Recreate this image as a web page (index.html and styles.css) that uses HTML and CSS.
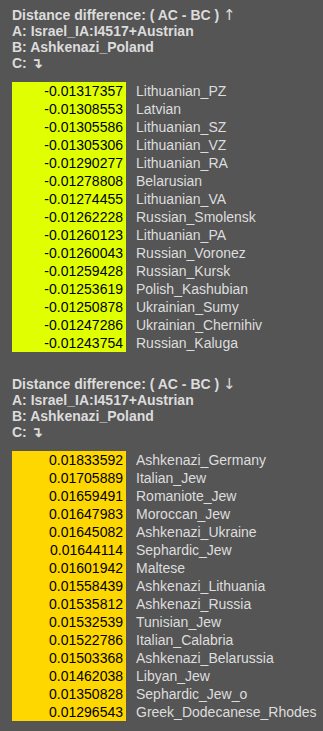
FILE: index.html
```html
<!DOCTYPE html>
<html>
<head>
<meta charset="utf-8">
<link rel="stylesheet" href="styles.css">
</head>
<body>
<section class="block first">
  <div class="head">
    <div>Distance difference: ( AC - BC ) <span class="arrow">↑</span></div>
    <div>A: Israel_IA:I4517+Austrian</div>
    <div>B: Ashkenazi_Poland</div>
    <div>C: ↴</div>
  </div>
  <div class="list neg">
    <div class="row"><span class="val">-0.01317357</span><span class="name">Lithuanian_PZ</span></div>
    <div class="row"><span class="val">-0.01308553</span><span class="name">Latvian</span></div>
    <div class="row"><span class="val">-0.01305586</span><span class="name">Lithuanian_SZ</span></div>
    <div class="row"><span class="val">-0.01305306</span><span class="name">Lithuanian_VZ</span></div>
    <div class="row"><span class="val">-0.01290277</span><span class="name">Lithuanian_RA</span></div>
    <div class="row"><span class="val">-0.01278808</span><span class="name">Belarusian</span></div>
    <div class="row"><span class="val">-0.01274455</span><span class="name">Lithuanian_VA</span></div>
    <div class="row"><span class="val">-0.01262228</span><span class="name">Russian_Smolensk</span></div>
    <div class="row"><span class="val">-0.01260123</span><span class="name">Lithuanian_PA</span></div>
    <div class="row"><span class="val">-0.01260043</span><span class="name">Russian_Voronez</span></div>
    <div class="row"><span class="val">-0.01259428</span><span class="name">Russian_Kursk</span></div>
    <div class="row"><span class="val">-0.01253619</span><span class="name">Polish_Kashubian</span></div>
    <div class="row"><span class="val">-0.01250878</span><span class="name">Ukrainian_Sumy</span></div>
    <div class="row"><span class="val">-0.01247286</span><span class="name">Ukrainian_Chernihiv</span></div>
    <div class="row"><span class="val">-0.01243754</span><span class="name">Russian_Kaluga</span></div>
  </div>
</section>
<section class="block second">
  <div class="head">
    <div>Distance difference: ( AC - BC ) <span class="arrow">↓</span></div>
    <div>A: Israel_IA:I4517+Austrian</div>
    <div>B: Ashkenazi_Poland</div>
    <div>C: ↴</div>
  </div>
  <div class="list pos">
    <div class="row"><span class="val">0.01833592</span><span class="name">Ashkenazi_Germany</span></div>
    <div class="row"><span class="val">0.01705889</span><span class="name">Italian_Jew</span></div>
    <div class="row"><span class="val">0.01659491</span><span class="name">Romaniote_Jew</span></div>
    <div class="row"><span class="val">0.01647983</span><span class="name">Moroccan_Jew</span></div>
    <div class="row"><span class="val">0.01645082</span><span class="name">Ashkenazi_Ukraine</span></div>
    <div class="row"><span class="val">0.01644114</span><span class="name">Sephardic_Jew</span></div>
    <div class="row"><span class="val">0.01601942</span><span class="name">Maltese</span></div>
    <div class="row"><span class="val">0.01558439</span><span class="name">Ashkenazi_Lithuania</span></div>
    <div class="row"><span class="val">0.01535812</span><span class="name">Ashkenazi_Russia</span></div>
    <div class="row"><span class="val">0.01532539</span><span class="name">Tunisian_Jew</span></div>
    <div class="row"><span class="val">0.01522786</span><span class="name">Italian_Calabria</span></div>
    <div class="row"><span class="val">0.01503368</span><span class="name">Ashkenazi_Belarussia</span></div>
    <div class="row"><span class="val">0.01462038</span><span class="name">Libyan_Jew</span></div>
    <div class="row"><span class="val">0.01350828</span><span class="name">Sephardic_Jew_o</span></div>
    <div class="row"><span class="val">0.01296543</span><span class="name">Greek_Dodecanese_Rhodes</span></div>
  </div>
</section>
</body>
</html>
```

FILE: styles.css
```css
html, body {
  margin: 0;
  padding: 0;
  background: #555555;
}
body {
  font-family: "Liberation Sans", Arial, sans-serif;
  font-size: 14px;
  color: #dddddd;
  padding: 6px 12px 0 12px;
  height: 731px;
  box-sizing: border-box;
  overflow: hidden;
}
.block {
  display: flex;
  flex-direction: column;
}
.second {
  margin-top: 24px;
}
.head {
  font-weight: bold;
  line-height: 16px;
  padding-top: 0.5px;
  margin-bottom: 11px;
  color: #dcdcdc;
}
.arrow {
  font-family: "DejaVu Sans", sans-serif;
  font-weight: normal;
  font-size: 15px;
  line-height: 16px;
}
.list {
  display: flex;
  flex-direction: column;
}
.row {
  display: flex;
  height: 18px;
  line-height: 18px;
}
.val {
  flex: 0 0 114px;
  width: 114px;
  box-sizing: border-box;
  padding-right: 3px;
  text-align: right;
  color: #000000;
  white-space: nowrap;
}
.neg .val {
  background: #e0ff00;
}
.pos .val {
  background: #ffd700;
}
.name {
  padding-left: 10px;
  white-space: nowrap;
  color: #dddddd;
}
```
